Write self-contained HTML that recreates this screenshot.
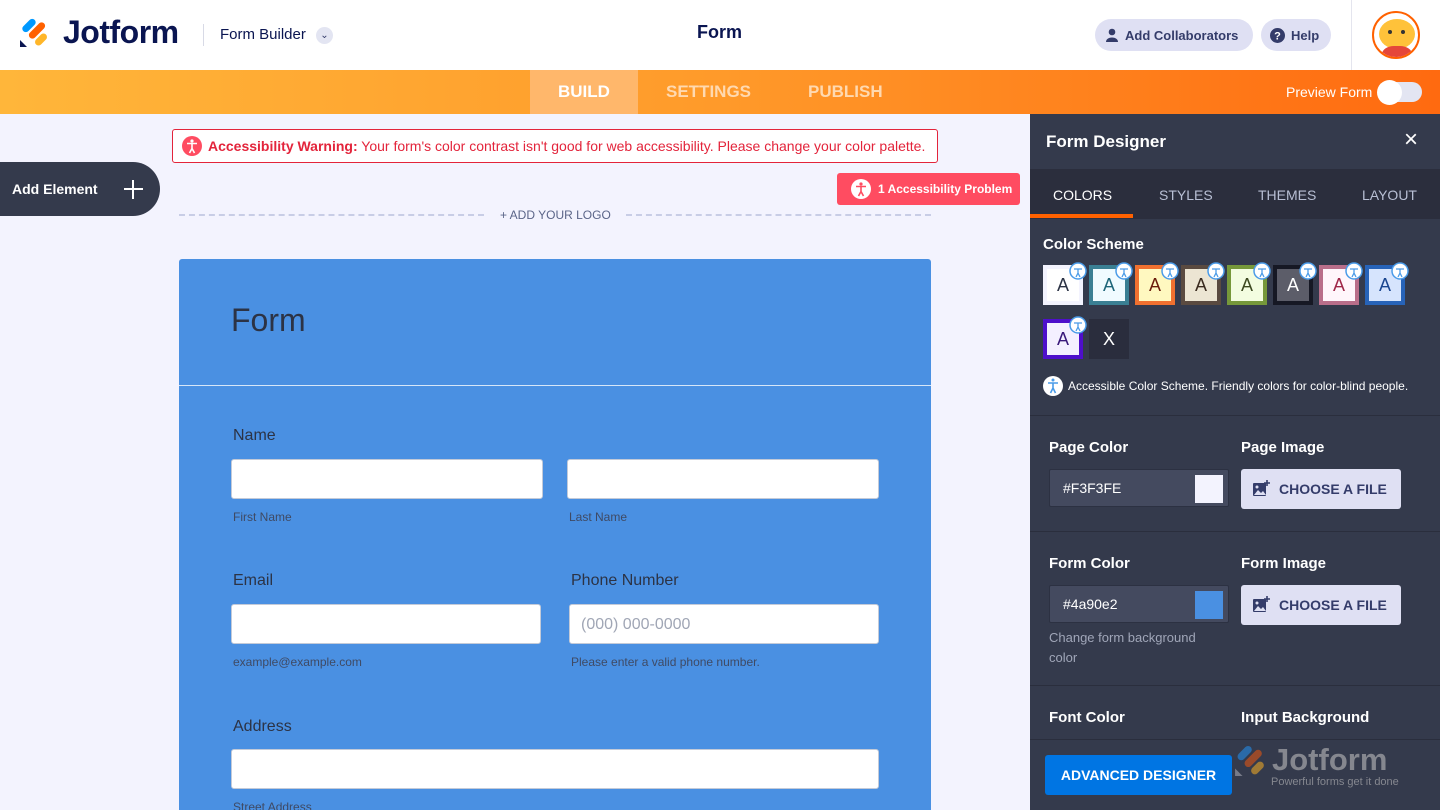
<!DOCTYPE html>
<html><head><meta charset="utf-8">
<style>
*{box-sizing:border-box;margin:0;padding:0}
html,body{width:1440px;height:810px;overflow:hidden}
body{font-family:"Liberation Sans",sans-serif;background:#f3f3fe;position:relative}
.abs{position:absolute}
.top{left:0;top:0;width:1440px;height:70px;background:#fff}
.bar{left:0;top:70px;width:1440px;height:44px;background:linear-gradient(90deg,#ffb63a 0%,#ff9a2a 50%,#ff6a10 100%)}
.pill{background:#dfe0f3;border-radius:16px;height:32px;color:#343c6a;font-weight:bold;font-size:13px;display:flex;align-items:center;gap:6px;padding:0 10px;white-space:nowrap}
.panel{left:1030px;top:114px;width:410px;height:696px;background:#343a4c}
.sw{position:absolute;width:40px;height:40px;border:4px solid;display:flex;align-items:center;justify-content:center;font-size:18px}
.lbl{color:#fff;font-weight:bold;font-size:15px}
.inp{background:#444a5f;border:1px solid #2c3142;border-radius:2px;width:180px;height:38px;color:#fff;font-size:14px;padding-left:13px;display:flex;align-items:center}
.inp i{position:absolute;right:5px;top:5px;width:28px;height:28px}
.cf{background:#dfe0f3;border-radius:3px;width:160px;height:40px;color:#343c6a;font-weight:bold;font-size:14px;display:flex;align-items:center;gap:9px;padding-left:11px}
.hr{left:1030px;width:410px;height:1px;background:#2a2e3d}
.fl{color:#2c3345;font-size:16px}
.fi{background:#fff;border:1px solid #c3cad8;border-radius:3px;height:40px}
.sub{color:#3f4a64;font-size:12px}
</style></head><body>
<div class="abs top"></div>
<svg class="abs" style="left:19px;top:16px" width="30" height="32" viewBox="0 0 30 32">
<rect x="2" y="6" width="16" height="7" rx="3.5" transform="rotate(-45 10 9.5)" fill="#0099ff"/>
<rect x="8" y="11" width="20" height="7" rx="3.5" transform="rotate(-45 18 14.5)" fill="#ff6100"/>
<rect x="15" y="20" width="14" height="7" rx="3.5" transform="rotate(-45 22 23.5)" fill="#ffb629"/>
<path d="M1 24 L1 31 L8 31 Z" fill="#0a1551"/>
</svg>
<div class="abs" style="left:63px;top:14px;font-size:32px;font-weight:bold;color:#0a1551;letter-spacing:-0.5px">Jotform</div>
<div class="abs" style="left:203px;top:24px;width:1px;height:22px;background:#d8dae6"></div>
<div class="abs" style="left:220px;top:26px;font-size:15px;color:#0a1551">Form Builder</div>
<div class="abs" style="left:316px;top:27px;width:17px;height:17px;border-radius:50%;background:#e3e5f2;color:#343c6a;font-size:10px;text-align:center;line-height:17px">⌄</div>
<div class="abs" style="left:697px;top:22px;font-size:18px;font-weight:bold;color:#0a1551">Form</div>
<div class="abs pill" style="left:1095px;top:19px;width:158px"><svg width="14" height="14" viewBox="0 0 14 14"><circle cx="7" cy="4" r="3.3" fill="#343c6a"/><path d="M1 14 C1 8 13 8 13 14Z" fill="#343c6a"/></svg>Add Collaborators</div>
<div class="abs pill" style="left:1261px;top:19px;width:70px;padding-left:9px"><svg width="15" height="15"><circle cx="7.5" cy="7.5" r="7.5" fill="#343c6a"/><text x="7.5" y="11.5" font-size="11" font-weight="bold" fill="#fff" text-anchor="middle" font-family="Liberation Sans">?</text></svg>Help</div>
<div class="abs" style="left:1351px;top:0;width:1px;height:70px;background:#e4e5ee"></div>
<div class="abs" style="left:1372px;top:11px;width:48px;height:48px;border-radius:50%;border:2px solid #ff6100;background:#fff;overflow:hidden">
<div style="position:absolute;left:5px;top:6px;width:36px;height:30px;border-radius:50%;background:#ffc23a"></div>
<div style="position:absolute;left:14px;top:17px;width:4px;height:4px;border-radius:50%;background:#333"></div>
<div style="position:absolute;left:27px;top:17px;width:4px;height:4px;border-radius:50%;background:#333"></div>
<div style="position:absolute;left:8px;top:33px;width:30px;height:20px;border-radius:40%;background:#e5463a"></div>
</div>
<div class="abs bar"></div>
<div class="abs" style="left:530px;top:70px;width:108px;height:44px;background:#ffb76b"></div>
<div class="abs" style="left:558px;top:82px;font-size:17px;font-weight:bold;color:#fff">BUILD</div>
<div class="abs" style="left:666px;top:82px;font-size:17px;font-weight:bold;color:#ffd9b0">SETTINGS</div>
<div class="abs" style="left:808px;top:82px;font-size:17px;font-weight:bold;color:#ffd9b0">PUBLISH</div>
<div class="abs" style="left:1286px;top:84px;font-size:14px;color:#fff">Preview Form</div>
<div class="abs" style="left:1378px;top:82px;width:44px;height:20px;border-radius:10px;background:#e3e5f2"></div>
<div class="abs" style="left:1377px;top:80px;width:25px;height:25px;border-radius:50%;background:#fff"></div>
<div class="abs" style="left:172px;top:129px;width:766px;height:34px;background:#fff;border:1px solid #e3243b;border-radius:3px;display:flex;align-items:center;padding-left:9px;gap:6px;font-size:14px;color:#e3243b;white-space:nowrap">
<svg width="20" height="20" viewBox="0 0 20 20"><circle cx="10" cy="10" r="10" fill="#ff4c61"/><circle cx="10" cy="5" r="1.6" fill="#fff"/><path d="M5 7.5h10M10 7.5v5M10 12.5l-2.5 4.5M10 12.5l2.5 4.5" stroke="#fff" stroke-width="1.6" fill="none"/></svg>
<span><b>Accessibility Warning:</b> Your form's color contrast isn't good for web accessibility. Please change your color palette.</span></div>
<div class="abs" style="left:0;top:162px;width:160px;height:54px;background:#343a4c;border-radius:0 27px 27px 0"></div>
<div class="abs" style="left:12px;top:181px;color:#fff;font-weight:bold;font-size:14px">Add Element</div>
<div class="abs" style="left:124px;top:188px;width:19px;height:2px;background:#fff"></div>
<div class="abs" style="left:132px;top:180px;width:2px;height:19px;background:#fff"></div>
<div class="abs" style="left:837px;top:173px;width:183px;height:32px;background:#ff4c61;border-radius:3px;display:flex;align-items:center;gap:7px;padding-left:14px;color:#fff;font-size:12px;font-weight:bold;white-space:nowrap">
<svg width="20" height="20" viewBox="0 0 20 20"><circle cx="10" cy="10" r="10" fill="#fff"/><circle cx="10" cy="5" r="1.6" fill="#ff4c61"/><path d="M5 7.5h10M10 7.5v5M10 12.5l-2.5 4.5M10 12.5l2.5 4.5" stroke="#ff4c61" stroke-width="1.6" fill="none"/></svg>1 Accessibility Problem</div>
<div class="abs" style="left:179px;top:214px;width:305px;border-top:2px dashed #c8cde6"></div>
<div class="abs" style="left:626px;top:214px;width:305px;border-top:2px dashed #c8cde6"></div>
<div class="abs" style="left:500px;top:208px;font-size:12px;color:#5a6488">+ ADD YOUR LOGO</div>
<div class="abs" style="left:179px;top:259px;width:752px;height:560px;background:#4a90e2;border-radius:3px"></div>
<div class="abs" style="left:231px;top:302px;font-size:32px;color:#2c3345">Form</div>
<div class="abs" style="left:179px;top:385px;width:752px;height:1px;background:#d6e6f8"></div>
<div class="abs fl" style="left:233px;top:427px">Name</div>
<div class="abs fi" style="left:231px;top:459px;width:312px"></div>
<div class="abs fi" style="left:567px;top:459px;width:312px"></div>
<div class="abs sub" style="left:233px;top:510px">First Name</div>
<div class="abs sub" style="left:569px;top:510px">Last Name</div>
<div class="abs fl" style="left:233px;top:572px">Email</div>
<div class="abs fl" style="left:571px;top:572px">Phone Number</div>
<div class="abs fi" style="left:231px;top:604px;width:310px"></div>
<div class="abs fi" style="left:569px;top:604px;width:310px;color:#a0a6b5;font-size:16px;padding:11px 0 0 11px">(000) 000-0000</div>
<div class="abs sub" style="left:233px;top:655px">example@example.com</div>
<div class="abs sub" style="left:571px;top:655px">Please enter a valid phone number.</div>
<div class="abs fl" style="left:233px;top:718px">Address</div>
<div class="abs fi" style="left:231px;top:749px;width:648px"></div>
<div class="abs sub" style="left:233px;top:800px">Street Address</div>
<div class="abs panel"></div>
<div class="abs" style="left:1046px;top:132px;color:#fff;font-weight:bold;font-size:17px">Form Designer</div>
<div class="abs" style="left:1404px;top:126px;color:#fff;font-size:24px">×</div>
<div class="abs" style="left:1030px;top:169px;width:410px;height:50px;background:#2b2e3d"></div>
<div class="abs" style="left:1030px;top:214px;width:103px;height:4px;background:#ff6100"></div>
<div class="abs" style="left:1053px;top:187px;color:#fff;font-size:14px">COLORS</div>
<div class="abs" style="left:1159px;top:187px;color:#b8bfd4;font-size:14px">STYLES</div>
<div class="abs" style="left:1258px;top:187px;color:#b8bfd4;font-size:14px">THEMES</div>
<div class="abs" style="left:1362px;top:187px;color:#b8bfd4;font-size:14px">LAYOUT</div>
<div class="abs lbl" style="left:1043px;top:236px">Color Scheme</div>
<div class="sw" style="left:1043px;top:265px;border-color:#f3f3fe;background:#fff;color:#2c3345">A</div>
<div class="sw" style="left:1089px;top:265px;border-color:#3a7f93;background:#f0fbff;color:#1e6679">A</div>
<div class="sw" style="left:1135px;top:265px;border-color:#f0702f;background:#fff8c0;color:#6b1c0c">A</div>
<div class="sw" style="left:1181px;top:265px;border-color:#5a4a40;background:#ece5d3;color:#3b2b20">A</div>
<div class="sw" style="left:1227px;top:265px;border-color:#76983a;background:#f3fde0;color:#3d4a20">A</div>
<div class="sw" style="left:1273px;top:265px;border-color:#161824;background:#5c5d69;color:#fff">A</div>
<div class="sw" style="left:1319px;top:265px;border-color:#b96e8a;background:#fff6fb;color:#a0284a">A</div>
<div class="sw" style="left:1365px;top:265px;border-color:#2763b8;background:#d6e4fd;color:#1a4690">A</div>
<div class="sw" style="left:1043px;top:319px;border-color:#4e0fcb;background:#f4f0ff;color:#3a1a7a">A</div>
<div class="sw" style="left:1089px;top:319px;border-color:#2a2d3d;background:#2a2d3d;color:#fff">X</div>
<svg class="abs" style="left:0;top:0" width="1440" height="810">
<g fill="#fff" stroke="#4a9be8" stroke-width="1.5">
<circle cx="1078" cy="271" r="8"/><circle cx="1124" cy="271" r="8"/><circle cx="1170" cy="271" r="8"/><circle cx="1216" cy="271" r="8"/><circle cx="1262" cy="271" r="8"/><circle cx="1308" cy="271" r="8"/><circle cx="1354" cy="271" r="8"/><circle cx="1400" cy="271" r="8"/><circle cx="1078" cy="325" r="8"/>
</g>
<g stroke="#4a9be8" stroke-width="1.3" fill="none">
<path d="M1074 269h8M1078 269v4M1078 273l-2 4M1078 273l2 4M1120 269h8M1124 269v4M1124 273l-2 4M1124 273l2 4M1166 269h8M1170 269v4M1170 273l-2 4M1170 273l2 4M1212 269h8M1216 269v4M1216 273l-2 4M1216 273l2 4M1258 269h8M1262 269v4M1262 273l-2 4M1262 273l2 4M1304 269h8M1308 269v4M1308 273l-2 4M1308 273l2 4M1350 269h8M1354 269v4M1354 273l-2 4M1354 273l2 4M1396 269h8M1400 269v4M1400 273l-2 4M1400 273l2 4M1074 323h8M1078 323v4M1078 327l-2 4M1078 327l2 4"/>
</g>
<circle cx="1053" cy="386" r="10" fill="#fff"/>
<path d="M1048 383h10M1053 383v5M1053 388l-2.5 5M1053 388l2.5 5" stroke="#4a9be8" stroke-width="1.6" fill="none"/><circle cx="1053" cy="380" r="1.5" fill="#4a9be8"/>
</svg>
<div class="abs" style="left:1068px;top:379px;color:#fff;font-size:12px;white-space:nowrap">Accessible Color Scheme. Friendly colors for color-blind people.</div>
<div class="abs hr" style="top:415px"></div>
<div class="abs lbl" style="left:1049px;top:439px">Page Color</div>
<div class="abs lbl" style="left:1241px;top:439px">Page Image</div>
<div class="abs inp" style="left:1049px;top:469px">#F3F3FE<i style="background:#f3f3fe"></i></div>
<div class="abs cf" style="left:1241px;top:469px"><svg width="18" height="18" viewBox="0 0 18 18"><rect x="1" y="3" width="13" height="13" rx="1" fill="#343c6a"/><path d="M2 15l4-5 3 3 2-2 3 4z" fill="#dfe0f3"/><circle cx="5" cy="7" r="1.5" fill="#dfe0f3"/><path d="M15 0v6M12 3h6" stroke="#343c6a" stroke-width="1.6"/></svg>CHOOSE A FILE</div>
<div class="abs hr" style="top:531px"></div>
<div class="abs lbl" style="left:1049px;top:555px">Form Color</div>
<div class="abs lbl" style="left:1241px;top:555px">Form Image</div>
<div class="abs inp" style="left:1049px;top:585px">#4a90e2<i style="background:#4a90e2"></i></div>
<div class="abs cf" style="left:1241px;top:585px"><svg width="18" height="18" viewBox="0 0 18 18"><rect x="1" y="3" width="13" height="13" rx="1" fill="#343c6a"/><path d="M2 15l4-5 3 3 2-2 3 4z" fill="#dfe0f3"/><circle cx="5" cy="7" r="1.5" fill="#dfe0f3"/><path d="M15 0v6M12 3h6" stroke="#343c6a" stroke-width="1.6"/></svg>CHOOSE A FILE</div>
<div class="abs" style="left:1049px;top:628px;color:#a0a6b8;font-size:13px;line-height:20px;width:170px">Change form background color</div>
<div class="abs hr" style="top:685px"></div>
<div class="abs lbl" style="left:1049px;top:709px">Font Color</div>
<div class="abs lbl" style="left:1241px;top:709px">Input Background</div>
<div class="abs hr" style="top:739px"></div>
<div class="abs" style="left:1045px;top:755px;width:187px;height:40px;background:#0075e3;border-radius:3px;color:#fff;font-weight:bold;font-size:14px;display:flex;align-items:center;justify-content:center">ADVANCED DESIGNER</div>
<svg class="abs" style="left:1234px;top:742px" width="32" height="36" viewBox="0 0 30 32">
<rect x="2" y="6" width="16" height="7" rx="3.5" transform="rotate(-45 10 9.5)" fill="#2a6aa8"/>
<rect x="8" y="11" width="20" height="7" rx="3.5" transform="rotate(-45 18 14.5)" fill="#9a4a2a"/>
<rect x="15" y="20" width="14" height="7" rx="3.5" transform="rotate(-45 22 23.5)" fill="#a07a35"/>
<path d="M1 24 L1 31 L8 31 Z" fill="#777a88"/></svg>
<div class="abs" style="left:1272px;top:742px;font-size:31px;font-weight:bold;color:#85878f">Jotform</div>
<div class="abs" style="left:1271px;top:776px;font-size:11px;color:#85878f">Powerful forms get it done</div>
</body></html>
